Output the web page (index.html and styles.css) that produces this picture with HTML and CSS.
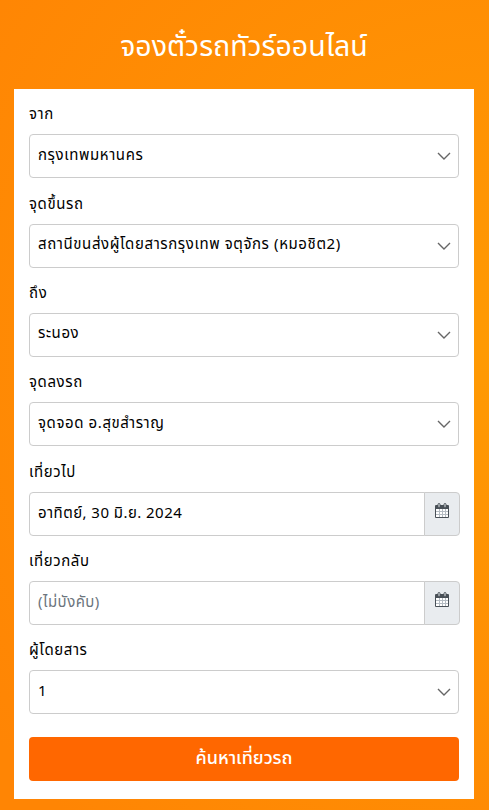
FILE: index.html
```html
<!DOCTYPE html>
<html lang="th">

<head>
    <meta charset="UTF-8">
    <meta name="viewport" content="width=device-width, initial-scale=1.0">
    <title>จองตั๋วรถทัวร์ออนไลน์</title>
    <link rel="stylesheet" href="styles.css">
</head>

<body>
    <h1>จองตั๋วรถทัวร์ออนไลน์</h1>

    <form class="search-box">
        <div class="form-group">
            <label for="from">จาก</label>
            <div class="select">
                <select id="from"><option>กรุงเทพมหานคร</option></select>
                <svg class="chevron" viewBox="0 0 14 8"><path d="M1 1l6 6 6-6"/></svg>
            </div>
        </div>

        <div class="form-group">
            <label for="pickup">จุดขึ้นรถ</label>
            <div class="select">
                <select id="pickup"><option>สถานีขนส่งผู้โดยสารกรุงเทพ จตุจักร (หมอชิต2)</option></select>
                <svg class="chevron" viewBox="0 0 14 8"><path d="M1 1l6 6 6-6"/></svg>
            </div>
        </div>

        <div class="form-group">
            <label for="to">ถึง</label>
            <div class="select">
                <select id="to"><option>ระนอง</option></select>
                <svg class="chevron" viewBox="0 0 14 8"><path d="M1 1l6 6 6-6"/></svg>
            </div>
        </div>

        <div class="form-group">
            <label for="dropoff">จุดลงรถ</label>
            <div class="select">
                <select id="dropoff"><option>จุดจอด อ.สุขสำราญ</option></select>
                <svg class="chevron" viewBox="0 0 14 8"><path d="M1 1l6 6 6-6"/></svg>
            </div>
        </div>

        <div class="form-group">
            <label for="depart">เที่ยวไป</label>
            <div class="date">
                <input type="text" id="depart" value="อาทิตย์, 30 มิ.ย. 2024">
                <span class="addon">
                    <svg class="calendar" viewBox="0 0 14 16">
                        <path class="page" d="M.5 3.5h13v11h-13z"/>
                        <path class="grid" d="M1 8.5h12M1 11.5h12M4.5 6v8M7.5 6v8M10.5 6v8"/>
                        <path class="head" d="M1 2h12q1 0 1 1v3H0V3q0-1 1-1z"/>
                        <path class="rings" d="M3 1.5q0-1 1-1t1 1v2q0 1-1 1t-1-1zM9 1.5q0-1 1-1t1 1v2q0 1-1 1t-1-1z"/>
                    </svg>
                </span>
            </div>
        </div>

        <div class="form-group">
            <label for="return">เที่ยวกลับ</label>
            <div class="date">
                <input type="text" id="return" placeholder="(ไม่บังคับ)">
                <span class="addon">
                    <svg class="calendar" viewBox="0 0 14 16">
                        <path class="page" d="M.5 3.5h13v11h-13z"/>
                        <path class="grid" d="M1 8.5h12M1 11.5h12M4.5 6v8M7.5 6v8M10.5 6v8"/>
                        <path class="head" d="M1 2h12q1 0 1 1v3H0V3q0-1 1-1z"/>
                        <path class="rings" d="M3 1.5q0-1 1-1t1 1v2q0 1-1 1t-1-1zM9 1.5q0-1 1-1t1 1v2q0 1-1 1t-1-1z"/>
                    </svg>
                </span>
            </div>
        </div>

        <div class="form-group">
            <label for="passengers">ผู้โดยสาร</label>
            <div class="select">
                <select id="passengers"><option>1</option></select>
                <svg class="chevron" viewBox="0 0 14 8"><path d="M1 1l6 6 6-6"/></svg>
            </div>
        </div>

        <button type="submit">ค้นหาเที่ยวรถ</button>
    </form>
</body>

</html>
```

FILE: styles.css
```css
* {
    box-sizing: border-box;
}

body {
    margin: 0;
    padding: 0 15px 0 14px;
    height: 810px;
    overflow: hidden;
    font-family: "Noto Sans Thai", "Noto Sans", "Open Sans", sans-serif;
    font-size: 15px;
    font-weight: 400;
    color: #000;
    background: radial-gradient(ellipse 620px 640px at 100% 43%, #ff9a03, #ff8504);
}

h1 {
    margin: 0;
    height: 89px;
    line-height: 95px;
    font-size: 28.5px;
    font-weight: 400;
    text-align: center;
    color: #fff;
}

.search-box {
    height: 710px;
    padding: 11.3px 15px 0;
    background-color: #fff;
}

.form-group {
    height: 89.35px;
    padding-top: 1px;
}

label {
    display: block;
    height: 33px;
    line-height: 27px;
    letter-spacing: 0.6px;
}

.select {
    position: relative;
    height: 44px;
}

select,
input {
    display: block;
    width: 100%;
    height: 44px;
    padding: 0 8px 2px;
    border: 1px solid #ccc;
    border-radius: 4px;
    background-color: #fff;
    font: inherit;
    letter-spacing: 0.6px;
    color: #000;
    appearance: none;
}

input {
    padding-bottom: 1px;
    letter-spacing: 0.45px;
}

input::placeholder {
    color: #6c757d;
}

.chevron {
    position: absolute;
    top: 18px;
    right: 8px;
    width: 14px;
    height: 8px;
    fill: none;
    stroke: #666;
    stroke-width: 1.4;
}

.date {
    display: flex;
    margin-right: -1px;
}

.date input {
    flex: 1;
    min-width: 0;
    border-radius: 4px 0 0 4px;
}

.addon {
    width: 36px;
    height: 44px;
    margin-left: -1px;
    padding: 10px 0 0 10px;
    border: 1px solid #ccc;
    border-radius: 0 4px 4px 0;
    background-color: #e9ecef;
}

.calendar {
    display: block;
    width: 14px;
    height: 16px;
    fill: none;
    stroke: #495057;
}

.calendar .page {
    fill: #fff;
}

.calendar .grid {
    stroke: #b5bcc3;
}

.calendar .head {
    fill: #495057;
    stroke: none;
}

.calendar .rings {
    fill: #e9ecef;
}

button {
    display: block;
    width: 100%;
    height: 44px;
    margin-top: 11px;
    padding: 0 0 1px;
    border: 0;
    border-radius: 4px;
    background-color: #ff6700;
    font: inherit;
    font-size: 18px;
    font-weight: 500;
    color: #fff;
}
```
